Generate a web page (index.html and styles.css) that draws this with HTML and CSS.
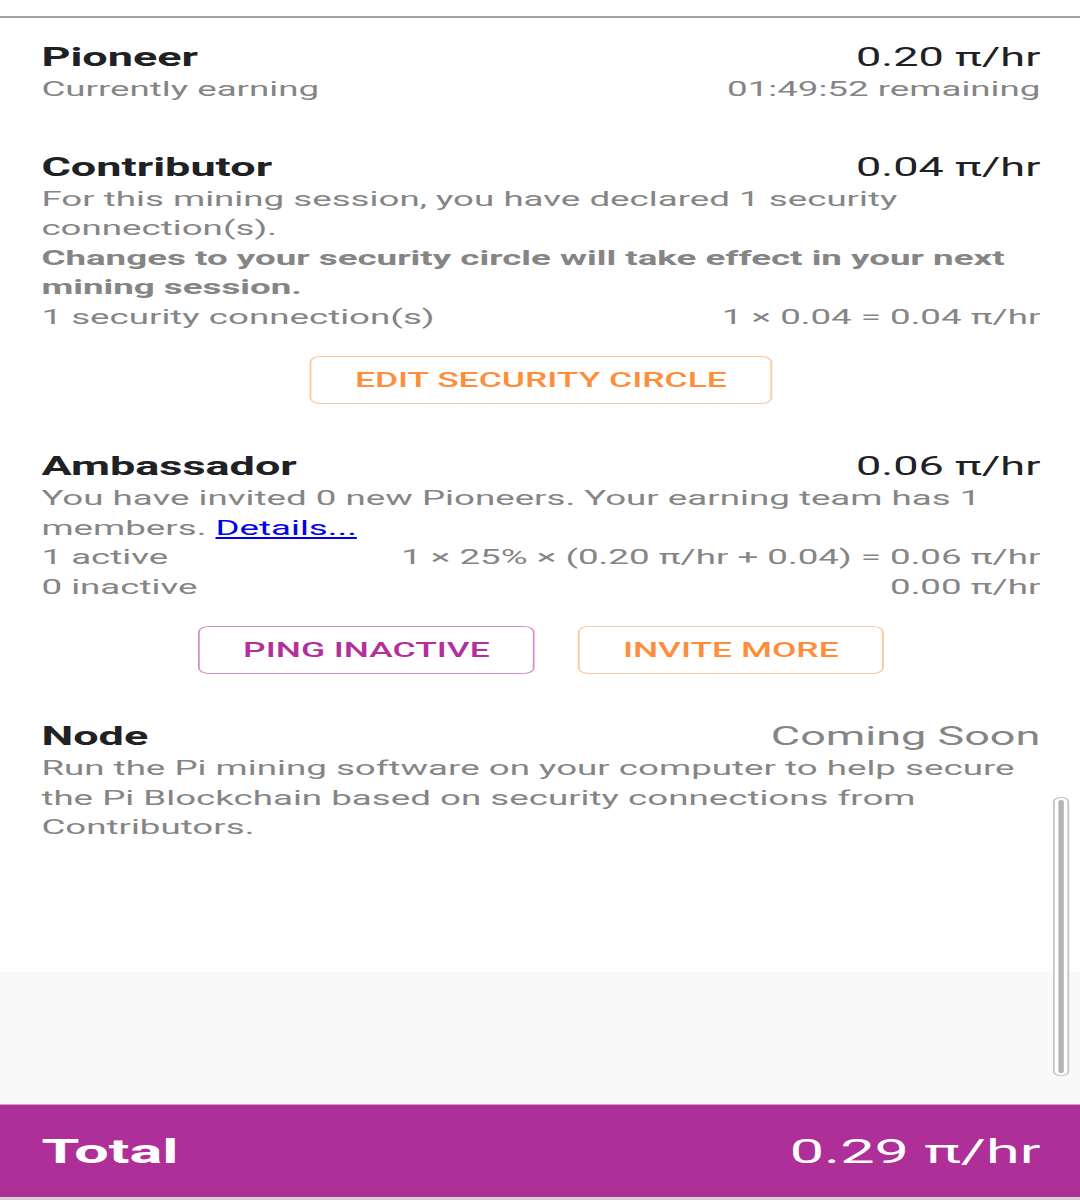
FILE: index.html
```html
<!DOCTYPE html>
<html lang="en">
<head>
  <meta charset="UTF-8">
  <meta name="viewport" content="width=device-width, initial-scale=1.0">

  <title>Mining rate</title>

  <link rel="stylesheet" href="styles.css">
</head>
<body>
  <div class="screen">
    <div class="topbar"></div>

    <div class="scroller">
      <div class="rates">
        <section class="rate">
          <div class="rate__head">
            <span class="rate__title">Pioneer</span>
            <span class="rate__value">0.20 π/hr</span>
          </div>
          <div class="rate__row">
            <span>Currently earning</span>
            <span>01:49:52 remaining</span>
          </div>
        </section>

        <section class="rate">
          <div class="rate__head">
            <span class="rate__title">Contributor</span>
            <span class="rate__value">0.04 π/hr</span>
          </div>
          <p class="rate__text">For this mining session, you have declared 1 security connection(s).</p>
          <p class="rate__text rate__text--bold">Changes to your security circle will take effect in your next mining session.</p>
          <div class="rate__row">
            <span>1 security connection(s)</span>
            <span>1 × 0.04 = 0.04 π/hr</span>
          </div>
          <div class="rate__tools">
            <button class="btn btn--orange">EDIT SECURITY CIRCLE</button>
          </div>
        </section>

        <section class="rate">
          <div class="rate__head">
            <span class="rate__title">Ambassador</span>
            <span class="rate__value">0.06 π/hr</span>
          </div>
          <p class="rate__text">You have invited 0 new Pioneers. Your earning team has 1 members. <a href="#" class="rate__link">Details...</a></p>
          <div class="rate__row">
            <span>1 active</span>
            <span>1 × 25% × (0.20 π/hr + 0.04) = 0.06 π/hr</span>
          </div>
          <div class="rate__row">
            <span>0 inactive</span>
            <span>0.00 π/hr</span>
          </div>
          <div class="rate__tools">
            <button class="btn btn--purple">PING INACTIVE</button>
            <button class="btn btn--orange">INVITE MORE</button>
          </div>
        </section>

        <section class="rate">
          <div class="rate__head">
            <span class="rate__title">Node</span>
            <span class="rate__value rate__value--muted">Coming Soon</span>
          </div>
          <p class="rate__text">Run the Pi mining software on your computer to help secure the Pi Blockchain based on security connections from Contributors.</p>
        </section>
      </div>

      <div class="scrollbar"><span class="scrollbar__thumb"></span></div>
    </div>

    <div class="total">
      <span class="total__label">Total</span>
      <span class="total__value">0.29 π/hr</span>
    </div>
  </div>
</body>
</html>
```

FILE: styles.css
```css
* {
  box-sizing: border-box;
}

body, html {
  margin: 0;
  padding: 0;
  height: 100%;
  overflow: hidden;
  background: #fff;
  font-family: Roboto, "Noto Sans", sans-serif;
}

.screen {
  width: 600px;
  height: 1200px;
  display: flex;
  flex-direction: column;
  transform: scaleX(1.8);
  transform-origin: 0 0;
}

.topbar {
  height: 17.5px;
  padding-top: 15px;
  border-bottom: 2px solid #a2a2a2;
  flex-shrink: 0;
}

.scroller {
  position: relative;
  flex: 1;
  background: #f9f9f9;
}

.rates {
  background: #fff;
  padding: 23.5px 22px 129px 23px;
}

.rate + .rate {
  margin-top: 46px;
}

.rate__head {
  display: flex;
  justify-content: space-between;
  font-size: 25px;
  line-height: 34px;
  color: #202124;
}

.rate__title {
  font-weight: 700;
}

.rate__value--muted {
  color: #858585;
}

.rate__text,
.rate__row {
  margin: 0;
  font-size: 20.4px;
  line-height: 29.5px;
  color: #858585;
}

.rate__text--bold {
  font-weight: 700;
}

.rate__row {
  display: flex;
  justify-content: space-between;
}

.rate__link {
  color: #0000ee;
}

.rate__tools {
  display: flex;
  justify-content: center;
  gap: 24px;
  margin-top: 24px;
}

.btn {
  height: 48px;
  padding: 0 24px;
  background: #fff;
  border: 1.4px solid;
  border-radius: 6px;
  font-family: Roboto, sans-serif;
  font-size: 19.7px;
  font-weight: 500;
  cursor: pointer;
}

.btn--orange {
  color: #ff8d3b;
  border-color: #ffc79b;
}

.btn--purple {
  color: #b2309b;
  border-color: #d88fcc;
}

.scrollbar {
  position: absolute;
  top: 779.5px;
  left: 585px;
  width: 9.4px;
  height: 279px;
  padding: 2px;
  border: 1.3px solid #c4c4c4;
  border-radius: 5px;
  display: flex;
  justify-content: center;
  background: #fff;
}

.scrollbar__thumb {
  width: 3.4px;
  background: #b3b3b3;
  border-radius: 2px;
}

.total {
  flex-shrink: 0;
  height: 96px;
  display: flex;
  justify-content: space-between;
  align-items: center;
  padding: 0 22px 0 23px;
  background: #ae2f98;
  border-top: 1px solid #d49bcb;
  border-bottom: 3px solid #d2d2d2;
  color: #fff;
  font-size: 34px;
}

.total__label {
  font-weight: 700;
}
```
